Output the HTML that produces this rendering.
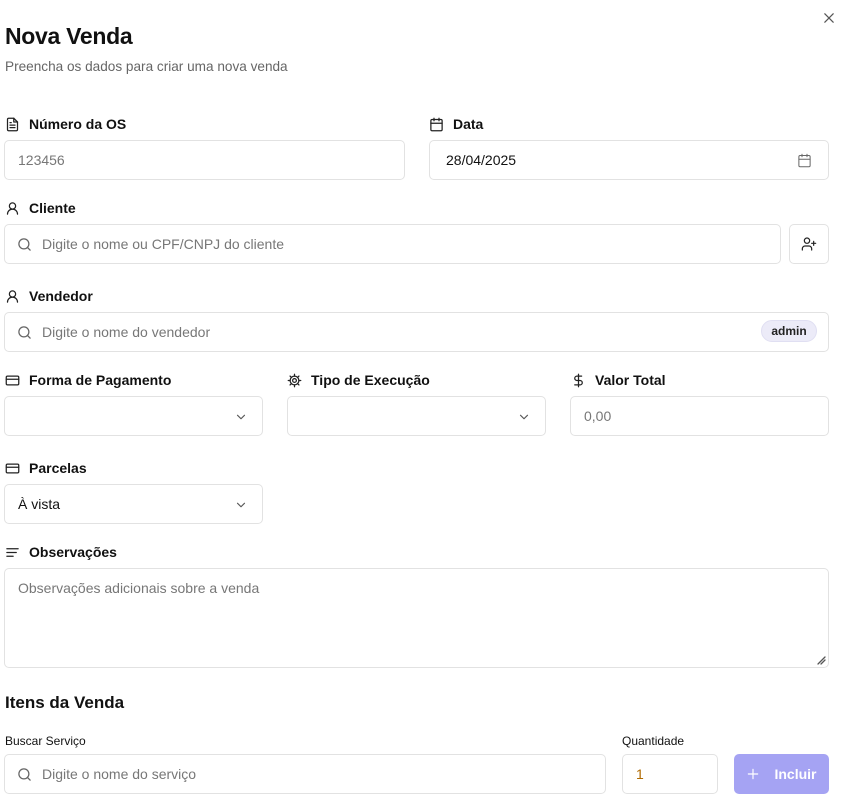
<!DOCTYPE html>
<html><head><meta charset="utf-8"><style>
*{box-sizing:border-box;margin:0;padding:0}
body{width:843px;height:809px;background:#fff;font-family:"Liberation Sans",sans-serif;color:#111;position:relative;overflow:hidden}
.a{position:absolute}
.lbl{position:absolute;font-size:14px;font-weight:bold;color:#111;display:flex;align-items:center;gap:9px;height:20px}
.lbl svg{width:15px;height:15px}
.in{position:absolute;border:1px solid #e2e2e2;border-radius:5px;height:40px;font-size:14px;color:#777;display:flex;align-items:center;padding-left:13px}
svg{fill:none;stroke:#222;stroke-width:2;stroke-linecap:round;stroke-linejoin:round}
.chev{position:absolute;right:14px;top:13px;width:14px;height:14px;stroke:#555}
.srch{width:15px;height:15px;stroke:#666;margin-right:10px;margin-left:-1px}
</style></head><body>
<div class="a" style="left:5px;top:23px;font-size:23px;font-weight:bold;letter-spacing:-0.3px">Nova Venda</div>
<div class="a" style="left:5px;top:59px;font-size:13.6px;color:#666">Preencha os dados para criar uma nova venda</div>
<svg class="a" style="left:824px;top:13px;width:10px;height:10px;stroke:#555;stroke-width:1.5" viewBox="0 0 12 12"><path d="M1 1l10 10M11 1L1 11"/></svg>

<div class="lbl" style="left:5px;top:114px"><svg viewBox="0 0 24 24"><path d="M14 2H6a2 2 0 0 0-2 2v16a2 2 0 0 0 2 2h12a2 2 0 0 0 2-2V8z"/><path d="M14 2v6h6M8 13h8M8 17h8M8 9h2"/></svg>Número da OS</div>
<div class="in" style="left:4px;top:140px;width:401px">123456</div>
<div class="lbl" style="left:429px;top:114px"><svg viewBox="0 0 24 24"><rect x="3" y="4" width="18" height="18" rx="2"/><path d="M16 2v4M8 2v4M3 10h18"/></svg>Data</div>
<div class="in" style="left:429px;top:140px;width:400px;color:#111;padding-left:16px">28/04/2025<svg class="a" style="right:16px;top:12px;width:15px;height:15px;stroke:#666;stroke-width:1.6" viewBox="0 0 24 24"><rect x="3" y="4" width="18" height="18" rx="2"/><path d="M16 2v4M8 2v4M3 10h18"/></svg></div>

<div class="lbl" style="left:5px;top:198px"><svg viewBox="0 0 24 24"><circle cx="12" cy="8" r="5"/><path d="M20 21a8 8 0 0 0-16 0"/></svg>Cliente</div>
<div class="in" style="left:4px;top:224px;width:777px"><svg class="srch" viewBox="0 0 24 24"><circle cx="11" cy="11" r="8"/><path d="M21 21l-4.3-4.3"/></svg>Digite o nome ou CPF/CNPJ do cliente</div>
<div class="in" style="left:789px;top:224px;width:40px;padding:0;justify-content:center"><svg style="width:16px;height:16px;stroke-width:1.8" viewBox="0 0 24 24"><path d="M16 21v-2a4 4 0 0 0-4-4H6a4 4 0 0 0-4 4v2"/><circle cx="9" cy="7" r="4"/><path d="M19 8v6M22 11h-6"/></svg></div>

<div class="lbl" style="left:5px;top:286px"><svg viewBox="0 0 24 24"><circle cx="12" cy="8" r="5"/><path d="M20 21a8 8 0 0 0-16 0"/></svg>Vendedor</div>
<div class="in" style="left:4px;top:312px;width:825px"><svg class="srch" viewBox="0 0 24 24"><circle cx="11" cy="11" r="8"/><path d="M21 21l-4.3-4.3"/></svg>Digite o nome do vendedor
<div class="a" style="left:756px;top:7px;width:56px;height:22px;border-radius:11px;background:#ecebf8;border:1px solid #e0dff2;color:#222;font-size:12px;font-weight:bold;display:flex;align-items:center;justify-content:center">admin</div></div>

<div class="lbl" style="left:5px;top:370px"><svg viewBox="0 0 24 24"><rect x="2" y="5" width="20" height="14" rx="2"/><path d="M2 10h20"/></svg>Forma de Pagamento</div>
<div class="in" style="left:4px;top:396px;width:259px"><svg class="chev" viewBox="0 0 24 24"><path d="M6 9l6 6 6-6"/></svg></div>
<div class="lbl" style="left:287px;top:370px"><svg viewBox="0 0 24 24"><circle cx="12" cy="12" r="3"/><path d="M12 2v3M12 19v3M4.9 4.9l2.1 2.1M17 17l2.1 2.1M2 12h3M19 12h3M4.9 19.1L7 17M17 7l2.1-2.1"/><circle cx="12" cy="12" r="7"/></svg>Tipo de Execução</div>
<div class="in" style="left:287px;top:396px;width:259px"><svg class="chev" viewBox="0 0 24 24"><path d="M6 9l6 6 6-6"/></svg></div>
<div class="lbl" style="left:571px;top:370px"><svg viewBox="0 0 24 24"><path d="M12 2v20M17 5H9.5a3.5 3.5 0 0 0 0 7h5a3.5 3.5 0 0 1 0 7H6"/></svg>Valor Total</div>
<div class="in" style="left:570px;top:396px;width:259px">0,00</div>

<div class="lbl" style="left:5px;top:458px"><svg viewBox="0 0 24 24"><rect x="2" y="5" width="20" height="14" rx="2"/><path d="M2 10h20"/></svg>Parcelas</div>
<div class="in" style="left:4px;top:484px;width:259px;color:#111">À vista<svg class="chev" viewBox="0 0 24 24"><path d="M6 9l6 6 6-6"/></svg></div>

<div class="lbl" style="left:5px;top:542px"><svg viewBox="0 0 24 24"><path d="M3 6h18M3 12h15M3 18h10"/></svg>Observações</div>
<div class="in" style="left:4px;top:568px;width:825px;height:100px;align-items:flex-start;padding-top:11px">Observações adicionais sobre a venda
<svg class="a" style="right:2px;bottom:2px;width:9px;height:9px;stroke:#555;stroke-width:1.3" viewBox="0 0 9 9"><path d="M1 8L8 1M4 8L8 4"/></svg></div>

<div class="a" style="left:5px;top:693px;font-size:17px;font-weight:bold;color:#111">Itens da Venda</div>
<div class="a" style="left:5px;top:734px;font-size:12px;color:#111">Buscar Serviço</div>
<div class="a" style="left:622px;top:734px;font-size:12px;color:#111">Quantidade</div>
<div class="in" style="left:4px;top:754px;width:602px"><svg class="srch" viewBox="0 0 24 24"><circle cx="11" cy="11" r="8"/><path d="M21 21l-4.3-4.3"/></svg>Digite o nome do serviço</div>
<div class="in" style="left:622px;top:754px;width:96px;color:#b06a00">1</div>
<div class="a" style="left:734px;top:754px;width:95px;height:40px;border-radius:5px;background:#a5a3f3;color:#fff;font-size:14px;font-weight:bold;display:flex;align-items:center;justify-content:center;gap:14px"><svg style="width:14px;height:14px;stroke:#fff" viewBox="0 0 24 24"><path d="M12 4v16M4 12h16"/></svg>Incluir</div>
</body></html>
